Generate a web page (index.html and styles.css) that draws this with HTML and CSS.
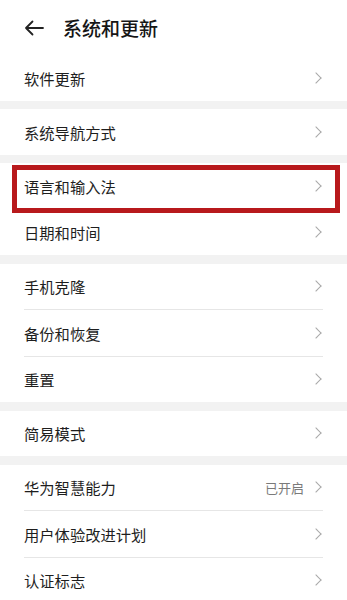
FILE: index.html
```html
<!DOCTYPE html>
<html>
<head>
    <meta charset="utf-8">
    <title>系统和更新</title>
    <meta name="viewport" content="width=device-width, initial-scale=1">
    <link rel="stylesheet" href="styles.css">
</head>
<body>
    <div class="topbar">
        <svg class="back" width="20" height="16" viewBox="0 0 20 16">
            <path d="M19 8H2M8.5 1.5L2 8l6.5 6.5" fill="none" stroke="#222" stroke-width="1.8" stroke-linecap="round" stroke-linejoin="round"/>
        </svg>
        <h1>系统和更新</h1>
    </div>

    <div class="group">
        <div class="row"><span class="label">软件更新</span><span class="arrow"></span></div>
    </div>

    <div class="group">
        <div class="row"><span class="label">系统导航方式</span><span class="arrow"></span></div>
    </div>

    <div class="group">
        <div class="row marked"><span class="label">语言和输入法</span><span class="arrow"></span></div>
        <div class="row"><span class="label">日期和时间</span><span class="arrow"></span></div>
    </div>

    <div class="group">
        <div class="row"><span class="label">手机克隆</span><span class="arrow"></span></div>
        <div class="row"><span class="label">备份和恢复</span><span class="arrow"></span></div>
        <div class="row"><span class="label">重置</span><span class="arrow"></span></div>
    </div>

    <div class="group">
        <div class="row"><span class="label">简易模式</span><span class="arrow"></span></div>
    </div>

    <div class="group">
        <div class="row"><span class="label">华为智慧能力</span><span class="value">已开启</span><span class="arrow"></span></div>
        <div class="row"><span class="label">用户体验改进计划</span><span class="arrow"></span></div>
        <div class="row"><span class="label">认证标志</span><span class="arrow"></span></div>
    </div>
</body>
</html>
```

FILE: styles.css
```css
html {
    font-family: "Noto Sans CJK SC", "Noto Sans", sans-serif;
}

body {
    margin: 0;
    background-color: #f2f2f2;
    color: #1e1e1e;
}

.topbar {
    display: flex;
    align-items: center;
    height: 55px;
    padding-left: 24px;
    background-color: #fff;
}

.back {
    display: block;
}

.topbar h1 {
    margin: 0 0 0 19px;
    font-size: 19px;
    font-weight: 500;
    color: #161616;
}

.group {
    background-color: #fff;
    margin-bottom: 8.5px;
}

.row {
    position: relative;
    display: flex;
    align-items: center;
    height: 45.5px;
    margin: 0 24px;
    border-bottom: 1px solid #e6e6e6;
    font-size: 15.3px;
}

.row:last-child {
    border-bottom: none;
}

.label {
    flex: 1;
}

.value {
    font-size: 13px;
    color: #7a7a7a;
    margin-right: 8px;
}

.arrow {
    width: 7px;
    height: 7px;
    margin-right: 3px;
    border-top: 1.3px solid #a8a8a8;
    border-right: 1.3px solid #a8a8a8;
    transform: rotate(45deg);
}

/* red annotation frame */
.marked::after {
    content: "";
    position: absolute;
    left: -12px;
    right: -17px;
    top: 2px;
    bottom: -4px;
    border: 5px solid #b8191c;
}
```
